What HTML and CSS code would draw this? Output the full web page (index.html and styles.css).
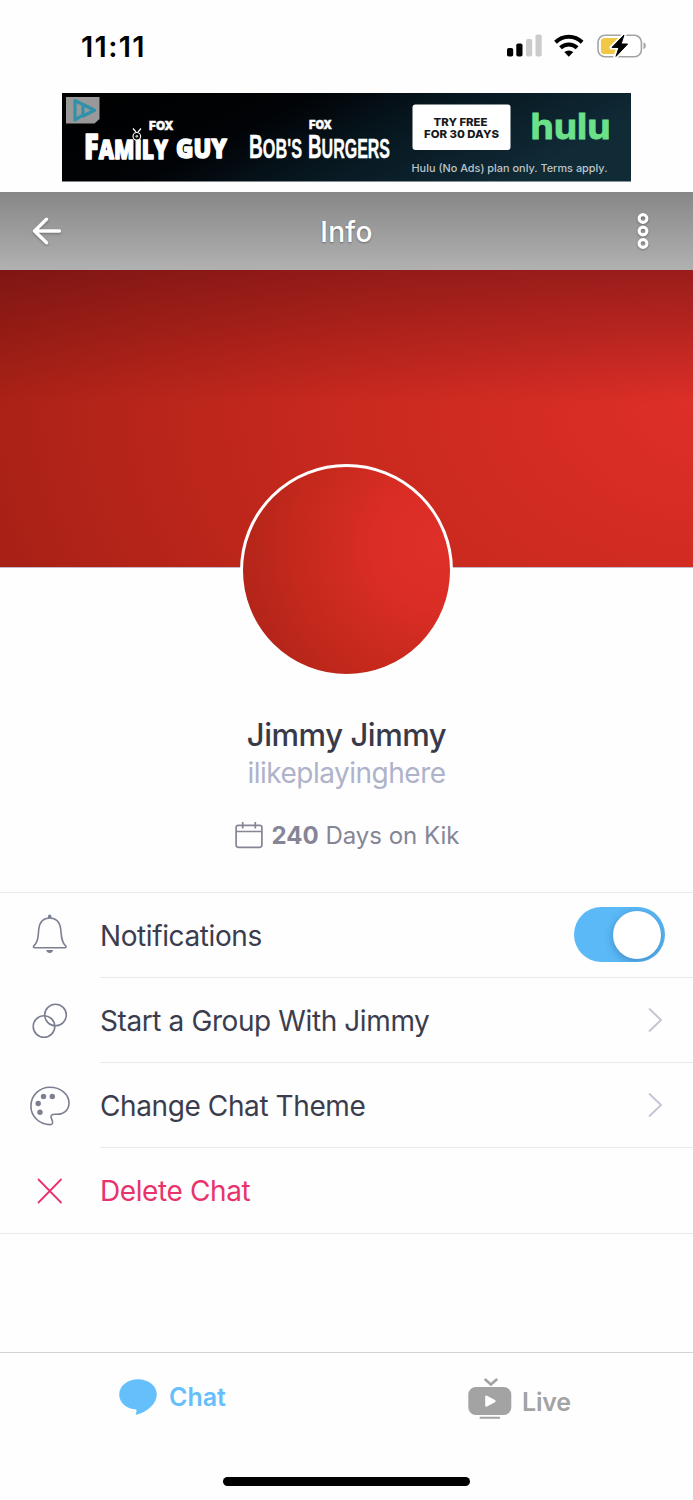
FILE: index.html
```html
<!DOCTYPE html>
<html lang="en">
<head>
<meta charset="utf-8">
<title>Info</title>
<link rel="stylesheet" href="styles.css">
</head>
<body>
<div class="screen">
  <div class="status-bar">
    <span class="time">11:11</span>
    <svg class="status-icons" width="141" height="26" viewBox="0 0 141 26">
      <rect x="1" y="15" width="6.2" height="8.6" rx="1.8"/>
      <rect x="10.3" y="10.5" width="6.2" height="13.1" rx="1.8"/>
      <rect x="20" y="6" width="6.2" height="17.6" rx="1.8" fill="#cbcbcb"/>
      <rect x="29.5" y="1.5" width="6.2" height="22.1" rx="1.8" fill="#cbcbcb"/>
      <g fill="none" stroke="#000" stroke-width="4">
        <path d="M49.5 9.2a19 19 0 0 1 26.6 0"/>
        <path d="M54.500 14.800a12 12 0 0 1 16.6 0"/>
      </g>
      <path d="M58.300 19.1a6.8 6.8 0 0 1 9 0l-4.500 4.600z"/>
      <rect x="92" y="2.300" width="43.4" height="21.500" rx="7" fill="#fff" stroke="#a3a3a3" stroke-width="1.6"/>
      <path d="M98.500 5h16v16H98.500a3.6 3.6 0 0 1-3.6-3.6V8.600a3.6 3.6 0 0 1 3.600-3.600z" fill="#f3c746"/>
      <path d="M137.500 9.300c1.800.7 2.300 2 2.300 3.500s-.5 2.800-2.300 3.500z" fill="#a3a3a3"/>
      <path d="M118.500 1.500 105.500 14.500h7l-3.200 9.500L121.700 11h-6.500z" stroke="#fff" stroke-width="4" stroke-linejoin="round"/>
      <path d="M118 2 106 14.400h7l-3 9L121.600 11h-6.500z" stroke="#000" stroke-width="1" stroke-linejoin="round"/>
    </svg>
  </div>

  <svg class="ad" width="569" height="88.500" viewBox="0 0 569 88.500">
    <defs>
      <linearGradient id="adbg" x1="0" y1="0" x2="1" y2=".3">
        <stop offset="0" stop-color="#000"/><stop offset=".4" stop-color="#010306"/>
        <stop offset=".65" stop-color="#071720"/><stop offset="1" stop-color="#102a36"/>
      </linearGradient>
    </defs>
    <rect width="569" height="88.500" fill="url(#adbg)"/>
    <path d="M4 4h33.500v22l-5 4.500H4z" fill="#999"/>
    <path d="M18.500 23.500 13 27V7.500L32.500 17.200 21 23v-9.500" fill="none" stroke="#2f91aa" stroke-width="3.200" stroke-linejoin="round" stroke-linecap="round"/>
    <g fill="#fff">
      <text class="ad-fox" x="87" y="37" textLength="24.500" lengthAdjust="spacingAndGlyphs">FOX</text>
      <text class="ad-guy" x="22" y="65.500" textLength="84" lengthAdjust="spacingAndGlyphs"><tspan class="ad-guy-cap">F</tspan>AMILY</text>
      <text class="ad-guy" x="114" y="65" textLength="51" lengthAdjust="spacingAndGlyphs">GUY</text>
      <text class="ad-fox" x="247" y="36" textLength="23" lengthAdjust="spacingAndGlyphs">FOX</text>
      <text class="ad-bob" x="187" y="65" textLength="53" lengthAdjust="spacingAndGlyphs"><tspan class="ad-bob-cap">B</tspan>OB'S</text>
      <text class="ad-bob" x="246" y="65" textLength="82" lengthAdjust="spacingAndGlyphs"><tspan class="ad-bob-cap">B</tspan>URGERS</text>
    </g>
    <g fill="#000" stroke="#fff" stroke-width="1.200">
      <circle cx="74.800" cy="43.300" r="3.800"/><path d="m74 39-3-3.500M76 39l3-3.500"/>
    </g>
    <circle cx="74.800" cy="43.300" r="1.400" fill="#bbb"/>
    <rect x="350.500" y="11.500" width="98" height="45.500" rx="3" fill="#fff"/>
    <g fill="#17191b">
      <text class="ad-btn" x="371.500" y="32.500" textLength="54" lengthAdjust="spacingAndGlyphs">TRY FREE</text>
      <text class="ad-btn" x="362" y="44.500" textLength="75" lengthAdjust="spacingAndGlyphs">FOR 30 DAYS</text>
    </g>
    <text class="ad-hulu" x="468.500" y="46" textLength="80" lengthAdjust="spacingAndGlyphs">hulu</text>
    <text class="ad-terms" x="349.500" y="78.500" textLength="196" lengthAdjust="spacingAndGlyphs">Hulu (No Ads) plan only. Terms apply.</text>
  </svg>

  <header class="nav">
    <svg class="nav-icon" width="30" height="30" viewBox="0 0 30 30"><path d="M27.500 15H3M14.500 3.200 2.500 15l12 11.800" fill="none" stroke="#fff" stroke-width="3.400" stroke-linecap="round" stroke-linejoin="round"/></svg>
    <h1 class="nav-title">Info</h1>
    <svg class="nav-icon" width="30" height="38" viewBox="0 0 30 38"><g fill="none" stroke="#fff" stroke-width="3.100"><circle cx="15" cy="6.500" r="3.900"/><circle cx="15" cy="19" r="3.900"/><circle cx="15" cy="31.500" r="3.900"/></g></svg>
  </header>

  <div class="cover"></div>
  <section class="profile">
    <div class="avatar"></div>
    <h2 class="name">Jimmy Jimmy</h2>
    <p class="username">ilikeplayinghere</p>
    <p class="days">
      <svg width="28" height="28" viewBox="0 0 28 28" fill="none" stroke="#858596" stroke-width="1.700"><rect x="1.100" y="4.300" width="25.800" height="22" rx="2.200"/><path d="M1 10.500h26M7.700 1v6.500M20.300 1v6.500"/></svg>
      <span class="days-text"><b>240</b> Days on Kik</span>
    </p>
  </section>

  <ul class="menu">
    <li class="item">
      <svg class="item-icon bell" width="40" height="42" viewBox="0 0 40 42"><path d="M3.600 33.200c5-4.500 4.400-10.300 5.200-17.200C9.700 8.800 14 5 19.700 5s10 3.800 11 11c.8 6.900.4 12.700 5.200 17.200.5 1-.1 1.500-1 1.500H4.600c-.9 0-1.500-.5-1-1.500z" fill="none" stroke="#7b7f91" stroke-width="1.600"/><path d="M18 5V3.200a1.700 1.700 0 0 1 3.400 0V5zM16.200 37h7c-.4 2-1.800 3-3.500 3s-3.100-1-3.500-3z" fill="#7b7f91"/></svg>
      <div class="item-body"><span class="label">Notifications</span><span class="switch"><span class="knob"></span></span></div>
    </li>
    <li class="item">
      <svg class="item-icon" width="40" height="40" viewBox="0 0 40 40" fill="none" stroke="#7b7f91" stroke-width="1.600"><circle cx="25.500" cy="14" r="10.800"/><circle cx="14" cy="25.500" r="10.800"/></svg>
      <div class="item-body"><span class="label">Start a Group With Jimmy</span><svg class="chevron" width="16" height="28" viewBox="0 0 16 28"><path d="m2 2.500 12 11.500L2 25.500"/></svg></div>
    </li>
    <li class="item">
      <svg class="item-icon" width="40" height="40" viewBox="0 0 40 40"><path d="M20 1.200C30.500 1.200 39 8.200 39 17c0 8-6.500 11.600-13 11.300-5-.2-6 1.500-4.300 4.800 1.500 3.300 1.300 5.500-1.500 5.500C9.500 38.600.900 30.500.900 20S9.500 1.200 20 1.200z" fill="none" stroke="#7b7f91" stroke-width="1.600"/><g fill="#7b7f91"><circle cx="13.500" cy="10.500" r="2.700"/><circle cx="22.300" cy="10.500" r="2.700"/><circle cx="8.200" cy="17.500" r="2.700"/><circle cx="10" cy="26.300" r="2.700"/></g></svg>
      <div class="item-body"><span class="label">Change Chat Theme</span><svg class="chevron" width="16" height="28" viewBox="0 0 16 28"><path d="m2 2.500 12 11.500L2 25.500"/></svg></div>
    </li>
    <li class="item danger">
      <svg class="item-icon" width="40" height="40" viewBox="0 0 40 40"><path d="m8.500 8.500 22.500 23m0-23L8.500 31.500" stroke="#e8336d" stroke-width="1.800" stroke-linecap="round"/></svg>
      <div class="item-body"><span class="label">Delete Chat</span></div>
    </li>
  </ul>

  <nav class="tabs">
    <div class="tab tab-chat">
      <svg width="38" height="36" viewBox="0 0 38 36"><path d="M19 .3c10.400 0 18.800 6.600 18.800 15 0 9.700-9.500 17.600-20.300 20.500-.7.100-.9-.2-.6-.8.600-1.500.800-3 .5-4.500C7.700 30 .2 24 .2 15.500.2 6.900 8.600.3 19 .3z" fill="#65bffa"/></svg>
      <span class="tab-text">Chat</span>
    </div>
    <div class="tab tab-live">
      <svg width="44" height="43" viewBox="0 0 44 43"><path d="m16.700 3 6.200 5.500L29.200 3" fill="none" stroke="#a3a3a3" stroke-width="2.700"/><rect x=".3" y="11" width="43" height="28" rx="7.500" fill="#a3a3a3"/><path d="M18.400 20.700v8.800l8-4.400z" fill="#fff" stroke="#fff" stroke-width="2.400" stroke-linejoin="round"/><path d="M12.500 41.800h18.700" stroke="#a3a3a3" stroke-width="2" stroke-linecap="round"/></svg>
      <span class="tab-text">Live</span>
    </div>
  </nav>
  <div class="home-indicator"></div>
</div>
</body>
</html>
```
FILE: styles.css
```css
* { box-sizing: border-box; }
body { margin: 0; background: #fefefe; font-family: Inter, "Liberation Sans", sans-serif; }
h1, h2, p, ul { margin: 0; padding: 0; font-weight: 400; }
svg { display: block; flex: none; }
.screen { width: 693px; height: 1500px; display: flex; flex-direction: column; overflow: hidden; }
.status-bar { height: 93px; flex: none; display: flex; justify-content: space-between; align-items: flex-start; padding: 33px 46px 0 81px; }
.time { font-size: 29px; font-weight: 600; line-height: 27px; letter-spacing: 1.300px; }
.ad { margin-left: 62px; }
.ad-fox { font: 900 12px Inter, sans-serif; stroke: #fff; stroke-width: .4px; }
.ad-guy { font: 800 27px "Open Sans", sans-serif; stroke: #fff; stroke-width: 1.400px; stroke-linejoin: round; }
.ad-guy-cap { font-size: 35px; }
.ad-bob { font: 700 28px "Liberation Sans", sans-serif; stroke: #fff; stroke-width: .4px; }
.ad-bob-cap { font-size: 33px; }
.ad-btn { font: 800 11px Inter, sans-serif; }
.ad-hulu { font: 700 35px Inter, sans-serif; fill: #6be28a; stroke: #6be28a; stroke-width: .8px; }
.ad-terms { font: 500 11px Inter, sans-serif; fill: #bdc4c9; }
.nav { height: 78px; flex: none; margin-top: 10.500px; display: flex; align-items: center; justify-content: space-between; padding: 0 35px 0 32px; background: linear-gradient(#878787, #b1b1b1); }
.nav-icon { filter: drop-shadow(0 1px 1px rgba(0,0,0,.3)); }
.nav-title { color: #fff; font-size: 28px; font-weight: 500; line-height: 34px; padding: 1px 0 0 3px; letter-spacing: .3px; text-shadow: 0 1px 2px rgba(0,0,0,.35); }
.cover { height: 298px; flex: none; border-bottom: 1px solid #c5b9c7; background: linear-gradient(rgba(60,4,14,.38), rgba(60,4,14,0) 45%), radial-gradient(ellipse 740px 520px at 103% 45%, #de2f28 0%, #c9291e 50%, #b9251a 76%, #a82116 100%); }
.profile { height: 324px; flex: none; display: flex; flex-direction: column; align-items: center; }
.avatar { width: 213px; height: 213px; flex: none; margin-top: -104.500px; border: 3.500px solid #fff; border-radius: 50%; background: radial-gradient(circle at 92% 38%, #de2f28 0, #da2d26 26%, #c5291c 58%, #a82218 100%) border-box; z-index: 1; }
.name { margin-top: 39px; height: 38px; line-height: 38px; font-size: 31px; font-weight: 500; letter-spacing: -.45px; color: #383a4a; }
.username { height: 38px; line-height: 38px; font-size: 28px; letter-spacing: -.5px; color: #aeb3ca; }
.days { margin: 25px 0 0 2px; height: 37px; display: flex; align-items: center; gap: 8px; color: #858596; font-size: 24px; line-height: 37px; }
.days b { font-weight: 700; }
.menu { list-style: none; border-top: 1px solid #e9e9ec; border-bottom: 1px solid #e9e9ec; }
.item { height: 85px; display: flex; align-items: center; padding-left: 30px; gap: 30px; }
.bell { margin-top: -3px; }
.item-body { flex: 1; height: 100%; display: flex; align-items: center; justify-content: space-between; border-bottom: 1px solid #e9e9ec; padding-right: 30px; }
.item:last-child .item-body { border: 0; }
.label { font-size: 28px; line-height: 34px; letter-spacing: -.4px; padding-top: 1px; color: #3b3d4e; white-space: nowrap; }
.danger .label { color: #e8336d; }
.switch { width: 91px; height: 55px; border-radius: 27.500px; background: #5bb9f8; display: flex; justify-content: flex-end; align-items: center; padding-right: 3.500px; margin: -1px -1.500px 0 0; overflow: hidden; }
.knob { width: 48px; height: 48px; border-radius: 50%; background: #fff; box-shadow: 0 2px 9px rgba(0,30,60,.3); }
.chevron path { fill: none; stroke: #c4c4d4; stroke-width: 1.900px; }
.tabs { margin-top: 118px; height: 125px; flex: none; display: flex; border-top: 1.500px solid #d4d4d6; }
.tab { width: 50%; display: flex; align-items: flex-start; font-size: 25px; font-weight: 600; }
.tab-chat { padding: 26px 0 0 118.500px; gap: 12.500px; color: #65bffa; }
.tab-live { padding: 22.500px 0 0 121px; gap: 10.500px; color: #a3a3a3; }
.tab-text { line-height: 36px; }
.tab-live .tab-text { padding-top: 8px; letter-spacing: -.2px; }
.home-indicator { flex: none; width: 247px; height: 9px; border-radius: 5px; background: #000; margin-left: 223px; }
```
